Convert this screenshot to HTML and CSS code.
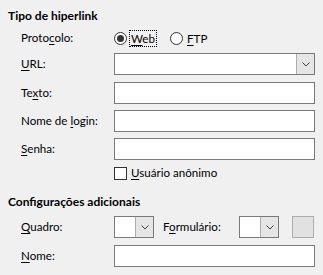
FILE: index.html
```html
<!DOCTYPE html>
<html lang="pt-br">
<head>
  <meta charset="UTF-8" />
  <title>Hiperlink - Internet</title>
  <link rel="stylesheet" href="styles.css">
</head>
<body>
  <div class="dialogo">
    <div class="titulo">Tipo de hiperlink</div>

    <div class="linha linha-protocolo">
      <span class="rotulo">Proto<u>c</u>olo:</span>
      <label class="radio">
        <span class="bolinha marcada"></span>
        <span class="texto-radio foco"><u>W</u>eb</span>
      </label>
      <label class="radio radio-ftp">
        <span class="bolinha"></span>
        <span class="texto-radio"><u>F</u>TP</span>
      </label>
    </div>

    <div class="linha linha-url">
      <span class="rotulo"><u>U</u>RL:</span>
      <div class="combo combo-largo">
        <span class="seta">
          <svg width="8" height="5" viewBox="0 0 8 5"><path d="M0.5 0.5 L4 4 L7.5 0.5" fill="none" stroke="#404040" stroke-width="1"/></svg>
        </span>
      </div>
    </div>

    <div class="linha linha-texto">
      <span class="rotulo">Te<u>x</u>to:</span>
      <div class="campo"></div>
    </div>

    <div class="linha">
      <span class="rotulo">Nome de <u>l</u>ogin:</span>
      <div class="campo"></div>
    </div>

    <div class="linha">
      <span class="rotulo"><u>S</u>enha:</span>
      <div class="campo"></div>
    </div>

    <div class="linha linha-check">
      <span class="rotulo"></span>
      <label class="check">
        <span class="caixa"></span>
        <span><u>U</u>suário anônimo</span>
      </label>
    </div>

    <div class="titulo titulo-config">Configurações adicionais</div>

    <div class="linha linha-quadro">
      <span class="rotulo"><u>Q</u>uadro:</span>
      <div class="combo combo-curto">
        <span class="seta">
          <svg width="8" height="5" viewBox="0 0 8 5"><path d="M0.5 0.5 L4 4 L7.5 0.5" fill="none" stroke="#404040" stroke-width="1"/></svg>
        </span>
      </div>
      <span class="rotulo-form">F<u>o</u>rmulário:</span>
      <div class="combo combo-curto">
        <span class="seta">
          <svg width="8" height="5" viewBox="0 0 8 5"><path d="M0.5 0.5 L4 4 L7.5 0.5" fill="none" stroke="#404040" stroke-width="1"/></svg>
        </span>
      </div>
      <span class="botao-cinza"></span>
    </div>

    <div class="linha linha-nome">
      <span class="rotulo"><u>N</u>ome:</span>
      <div class="campo"></div>
    </div>
  </div>
</body>
</html>
```

FILE: styles.css
```css
body {
  margin: 0;
  background: #f0f0f0;
  font-family: 'Lato', 'Noto Sans', sans-serif;
  font-size: 11.6px;
  color: #000;
}

.dialogo {
  padding: 8px 8px 0 8px;
  display: flex;
  flex-direction: column;
}

.titulo {
  font-weight: bold;
  font-size: 12px;
  line-height: 16px;
  height: 16px;
}

.titulo-config {
  margin-top: 14px;
}

.linha {
  display: flex;
  align-items: center;
  padding-left: 13px;
  height: 22px;
  margin-top: 6px;
  line-height: 16px;
}

.linha-protocolo {
  height: 16px;
  margin-top: 6px;
}

.linha-url,
.linha-texto,
.linha-nome {
  margin-top: 7px;
}

.linha-check {
  height: 14px;
}

.linha-quadro {
  margin-top: 6px;
}

.rotulo {
  width: 93px;
  flex-shrink: 0;
}

u {
  text-decoration-thickness: 1px;
  text-underline-offset: 2px;
}

/* radios */
.radio {
  display: flex;
  align-items: center;
}

.radio-ftp {
  margin-left: 13px;
}

.bolinha {
  width: 13px;
  height: 13px;
  box-sizing: border-box;
  border: 1px solid #333;
  border-radius: 50%;
  background: #fff;
  display: flex;
  justify-content: center;
  align-items: center;
}

.bolinha.marcada::after {
  content: '';
  width: 7px;
  height: 7px;
  border-radius: 50%;
  background: #333;
}

.texto-radio {
  margin-left: 2px;
  padding: 0 1px;
  border: 1px solid transparent;
  line-height: 15px;
}

.foco {
  border: 1px dotted #000;
}

/* campos */
.campo {
  width: 201px;
  height: 22px;
  box-sizing: border-box;
  border: 1px solid #7a7a7a;
  background: #fff;
}

.combo {
  height: 22px;
  box-sizing: border-box;
  border: 1px solid #7a7a7a;
  background: #fff;
  display: flex;
  justify-content: flex-end;
}

.combo-largo {
  width: 201px;
}

.combo-curto {
  width: 40px;
}

.seta {
  width: 18px;
  box-sizing: border-box;
  border-left: 1px solid #adadad;
  background: #e5e5e5;
  display: flex;
  justify-content: center;
  align-items: center;
}

/* checkbox */
.check {
  display: flex;
  align-items: center;
  gap: 4px;
}

.caixa {
  width: 13px;
  height: 13px;
  box-sizing: border-box;
  border: 1px solid #333;
  background: #fff;
}

.rotulo-form {
  margin-left: 9px;
  width: 76px;
}

.botao-cinza {
  margin-left: 13px;
  width: 22px;
  height: 22px;
  box-sizing: border-box;
  border: 1px solid #adadad;
  background: #e1e1e1;
}
```
